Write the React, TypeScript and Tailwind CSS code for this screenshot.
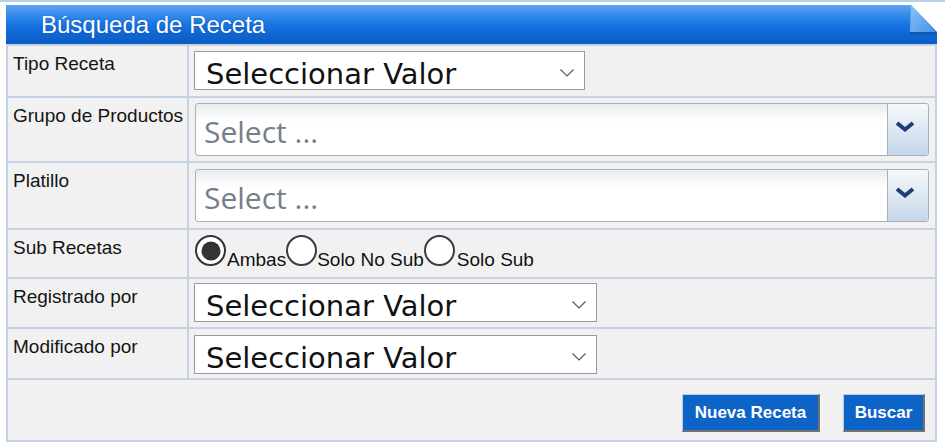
import React from "react";

const arial = { fontFamily: '"Liberation Sans", Arial, sans-serif' } as const;

function NativeSelect({ width }: { width: string }) {
  return (
    <div
      className={`${width} h-[39px] border border-[#9a9a9a] bg-white flex items-start justify-between pl-[11px] pr-[10px]`}
    >
      <span
        className="text-[29px] leading-[29px] pt-[8px] text-[#111] whitespace-nowrap"
        style={{ fontFamily: '"DejaVu Sans", Verdana, sans-serif' }}
      >
        Seleccionar Valor
      </span>
      <svg width="14" height="8" viewBox="0 0 14 8" className="mt-[17px]">
        <polyline points="0.5,0.5 7,7 13.5,0.5" fill="none" stroke="#555" strokeWidth="1.1" />
      </svg>
    </div>
  );
}

function Combo() {
  return (
    <div className="w-[734px] h-[53px] border border-[#a7afc1] rounded-[3px] flex overflow-hidden bg-[linear-gradient(to_bottom,#e9ebee_0%,#ffffff_35%,#ffffff_100%)]">
      <span
        className="flex-1 pl-[8px] pt-[13px] text-[30px] leading-[30px] text-[#787e89] whitespace-nowrap"
        style={{ fontFamily: '"Open Sans", "Segoe UI", sans-serif' }}
      >
        Select ...
      </span>
      <div className="w-[41px] border-l border-[#a7afc1] bg-[linear-gradient(to_bottom,#f6f8fb_0%,#e3ebf4_40%,#c4d6ea_100%)] flex items-start justify-center pt-[17px] pr-[6px]">
        <svg width="20" height="11" viewBox="0 0 20 11">
          <polyline points="2,2 10,8.5 18,2" fill="none" stroke="#1f3f78" strokeWidth="4" strokeLinejoin="miter" />
        </svg>
      </div>
    </div>
  );
}

function Radio({ checked }: { checked?: boolean }) {
  return (
    <span
      className={`inline-block w-[31px] h-[31px] rounded-full bg-white align-baseline relative ${
        checked ? "border-[2.5px] border-[#333]" : "border-2 border-[#3c3c3c]"
      }`}
    >
      {checked && (
        <span className="absolute left-1/2 top-1/2 w-[19px] h-[19px] -translate-x-1/2 -translate-y-1/2 rounded-full bg-[#333]" />
      )}
    </span>
  );
}

function Label({ children }: { children: React.ReactNode }) {
  return (
    <div className="bg-[#f1f1f1] pl-[5px] pt-[4px] text-[19px] text-[#141414] whitespace-nowrap" style={arial}>
      {children}
    </div>
  );
}

export default function App() {
  return (
    <div className="w-[945px] h-[444px] bg-white overflow-hidden" style={arial}>
      <div className="h-[2px] bg-[#b3d2f2]" />
      <div className="ml-[6px] mt-[3px] w-[931px]">
        <div className="relative h-[39px] flex items-center pl-[35px] bg-[linear-gradient(to_bottom,#5ea5f1_0%,#3a8eec_22%,#1774e2_50%,#0f66d2_75%,#0b5cc2_100%)]">
          <span
            className="text-white text-[24px] leading-none whitespace-nowrap"
            style={{ ...arial, textShadow: "0 0 2px rgba(0,40,110,0.35)" }}
          >
            Búsqueda de Receta
          </span>
          <svg className="absolute right-0 top-0" width="28" height="30" viewBox="0 0 28 30">
            <defs>
              <linearGradient id="fold" x1="0" y1="0" x2="1" y2="1">
                <stop offset="0" stopColor="#8cc2f7" />
                <stop offset="1" stopColor="#4494e8" />
              </linearGradient>
            </defs>
            <polygon points="2,0 28,0 28,27" fill="#ffffff" />
            <polygon points="0,28 0,30 28,30 28,28" fill="#0a4fa8" opacity="0.5" />
            <polygon points="2,0 1,27 27,27" fill="url(#fold)" />
            <line x1="1" y1="27.5" x2="27" y2="27.5" stroke="#0b4a9c" strokeWidth="1" opacity="0.7" />
          </svg>
        </div>

        <div className="grid grid-cols-[179px_746px] grid-rows-[50px_63px_65px_47px_48px_49px_60px] gap-[2px] p-[2px] bg-[#c3d3e3]">
          <Label>Tipo Receta</Label>
          <div className="bg-[#f1f1f1] pl-[5px] pt-[5px]">
            <NativeSelect width="w-[391px]" />
          </div>

          <Label>Grupo de Productos</Label>
          <div className="bg-[#f1f1f1] pl-[6px] pt-[5px]">
            <Combo />
          </div>

          <Label>Platillo</Label>
          <div className="bg-[#f1f1f1] pl-[6px] pt-[6px]">
            <Combo />
          </div>

          <Label>Sub Recetas</Label>
          <div className="bg-[#f1f1f1] pl-[6px] pt-[5px] text-[19px] text-[#111] whitespace-nowrap leading-normal" style={arial}>
            <Radio checked />
            <span className="ml-[1px]">Ambas</span>
            <Radio />
            <span>Solo No Sub</span>
            <Radio />
            <span className="ml-[2px]">Solo Sub</span>
          </div>

          <Label>Registrado por</Label>
          <div className="bg-[#f1f1f1] pl-[5px] pt-[4px]">
            <NativeSelect width="w-[403px]" />
          </div>

          <Label>Modificado por</Label>
          <div className="bg-[#f1f1f1] pl-[5px] pt-[6px]">
            <NativeSelect width="w-[403px]" />
          </div>

          <div className="col-span-2 bg-[#f1f1f1] flex justify-end items-start gap-[23px] pt-[14px] pr-[10px]">
            <button
              className="w-[138px] h-[38px] bg-[#0e63c6] text-white font-bold text-[17px] border-t border-l border-[#b9cde6] border-b-2 border-r-2 border-b-[#727272] border-r-[#727272]"
              style={arial}
            >
              Nueva Receta
            </button>
            <button
              className="w-[82px] h-[38px] bg-[#0e63c6] text-white font-bold text-[17px] border-t border-l border-[#b9cde6] border-b-2 border-r-2 border-b-[#727272] border-r-[#727272]"
              style={arial}
            >
              Buscar
            </button>
          </div>
        </div>
      </div>
    </div>
  );
}
